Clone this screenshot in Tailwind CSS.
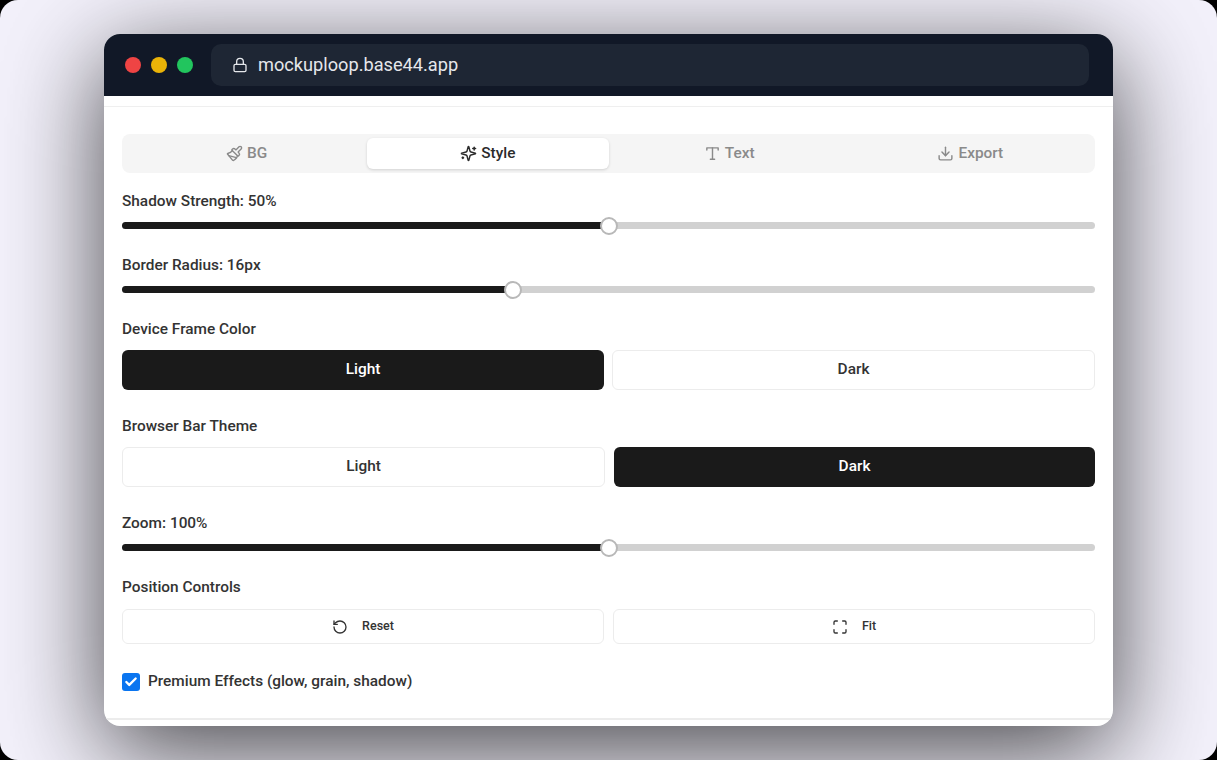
<!DOCTYPE html>
<html lang="en">
<head>
    <meta charset="UTF-8">
    <meta name="viewport" content="width=device-width, initial-scale=1.0">
    <title>Mockuploop</title>
    <script src="https://cdn.jsdelivr.net/npm/@tailwindcss/browser@4"></script>
</head>
<body class="bg-black font-['Roboto',sans-serif] overflow-hidden">
    <div class="w-[1217px] h-[760px] rounded-[18px] bg-[#f3f1fb] pl-[104px] pt-[34px] overflow-hidden">
        <!-- window -->
        <div class="w-[1009px] h-[692px] rounded-[16px] overflow-hidden bg-white shadow-[0_24px_100px_rgba(0,0,0,0.72)] flex flex-col">
            <!-- title bar -->
            <div class="h-[62px] bg-[#111827] flex items-center pl-[21px] pr-[24px] shrink-0">
                <div class="flex gap-[10px]">
                    <span class="w-4 h-4 rounded-full bg-[#ef4444]"></span>
                    <span class="w-4 h-4 rounded-full bg-[#eab308]"></span>
                    <span class="w-4 h-4 rounded-full bg-[#22c55e]"></span>
                </div>
                <div class="ml-[18px] flex-1 h-[42px] rounded-[10px] bg-[#1e2634] flex items-center pl-[21px] gap-[10px] text-[#e5e7eb]">
                    <svg class="w-4 h-4" viewBox="0 0 24 24" fill="none" stroke="currentColor" stroke-width="2" stroke-linecap="round" stroke-linejoin="round"><rect width="18" height="11" x="3" y="11" rx="2"/><path d="M7 11V7a5 5 0 0 1 10 0v4"/></svg>
                    <span class="text-[18.2px] leading-none">mockuploop.base44.app</span>
                </div>
            </div>

            <div class="h-[11px] border-b border-[#efefef] shrink-0"></div>

            <!-- panel -->
            <div class="flex-1 px-[18px] pt-[27px] flex flex-col text-[#333333]">
                <!-- tabs -->
                <div class="grid grid-cols-4 h-[39px] p-1 rounded-[8px] bg-[#f5f5f5] text-[15.4px] font-medium text-[#8a8a8a]">
                    <div class="flex items-center justify-center gap-[4px]">
                        <svg class="w-[17px] h-[17px]" viewBox="0 0 24 24" fill="none" stroke="currentColor" stroke-width="2" stroke-linecap="round" stroke-linejoin="round"><path d="m14.622 17.897-10.68-2.913"/><path d="M18.376 2.622a1 1 0 1 1 3.002 3.002L17.36 9.643a.5.5 0 0 0 0 .707l.944.944a2.41 2.41 0 0 1 0 3.408l-.944.944a.5.5 0 0 1-.707 0L8.354 7.348a.5.5 0 0 1 0-.707l.944-.944a2.41 2.41 0 0 1 3.408 0l.944.944a.5.5 0 0 0 .707 0z"/><path d="M9 8c-1.804 2.71-3.97 3.46-6.583 3.948a.507.507 0 0 0-.302.819l7.32 8.883a1 1 0 0 0 1.185.204C12.735 20.405 16 16.792 16 15"/></svg>
                        BG
                    </div>
                    <div class="flex items-center justify-center gap-[4px] bg-white rounded-[6px] shadow-[0_1px_3px_rgba(0,0,0,0.15)] text-[#2b2b2b]">
                        <svg class="w-[17px] h-[17px]" viewBox="0 0 24 24" fill="none" stroke="currentColor" stroke-width="2" stroke-linecap="round" stroke-linejoin="round"><path d="M9.937 15.5A2 2 0 0 0 8.5 14.063l-6.135-1.582a.5.5 0 0 1 0-.962L8.5 9.936A2 2 0 0 0 9.937 8.5l1.582-6.135a.5.5 0 0 1 .963 0L14.063 8.5A2 2 0 0 0 15.5 9.937l6.135 1.581a.5.5 0 0 1 0 .964L15.5 14.063a2 2 0 0 0-1.437 1.437l-1.582 6.135a.5.5 0 0 1-.963 0z"/><path d="M20 3v4"/><path d="M22 5h-4"/><path d="M4 17v2"/><path d="M5 18H3"/></svg>
                        Style
                    </div>
                    <div class="flex items-center justify-center gap-[4px]">
                        <svg class="w-[17px] h-[17px]" viewBox="0 0 24 24" fill="none" stroke="currentColor" stroke-width="2" stroke-linecap="round" stroke-linejoin="round"><path d="M4 7V4h16v3"/><path d="M9 20h6"/><path d="M12 4v16"/></svg>
                        Text
                    </div>
                    <div class="flex items-center justify-center gap-[4px]">
                        <svg class="w-[17px] h-[17px]" viewBox="0 0 24 24" fill="none" stroke="currentColor" stroke-width="2" stroke-linecap="round" stroke-linejoin="round"><path d="M12 15V3"/><path d="M21 15v4a2 2 0 0 1-2 2H5a2 2 0 0 1-2-2v-4"/><path d="m7 10 5 5 5-5"/></svg>
                        Export
                    </div>
                </div>

                <!-- shadow strength -->
                <div class="mt-[19px] h-[20px] flex items-center text-[15.4px] font-medium">Shadow Strength: 50%</div>
                <div class="mt-[10px] relative h-[7px] rounded-full bg-[#d1d1d1]">
                    <div class="h-full w-[487px] rounded-l-full bg-[#1a1a1a]"></div>
                    <div class="absolute left-[477.5px] top-[-5.5px] w-[18px] h-[18px] rounded-full bg-white border-2 border-[#b8b8b8]"></div>
                </div>

                <!-- border radius -->
                <div class="mt-[27px] h-[20px] flex items-center text-[15.4px] font-medium">Border Radius: 16px</div>
                <div class="mt-[10px] relative h-[7px] rounded-full bg-[#d1d1d1]">
                    <div class="h-full w-[392px] rounded-l-full bg-[#1a1a1a]"></div>
                    <div class="absolute left-[382px] top-[-5.5px] w-[18px] h-[18px] rounded-full bg-white border-2 border-[#b8b8b8]"></div>
                </div>

                <!-- device frame color -->
                <div class="mt-[27px] h-[20px] flex items-center text-[15.4px] font-medium">Device Frame Color</div>
                <div class="mt-[10px] flex gap-[8px] text-[15.4px] font-medium">
                    <div class="w-[482px] h-[40px] rounded-[6px] bg-[#1a1a1a] text-white flex items-center justify-center">Light</div>
                    <div class="flex-1 h-[40px] rounded-[6px] border border-[#ececec] flex items-center justify-center">Dark</div>
                </div>

                <!-- browser bar theme -->
                <div class="mt-[27px] h-[20px] flex items-center text-[15.4px] font-medium">Browser Bar Theme</div>
                <div class="mt-[10px] flex gap-[9px] text-[15.4px] font-medium">
                    <div class="w-[483px] h-[40px] rounded-[6px] border border-[#ececec] flex items-center justify-center">Light</div>
                    <div class="flex-1 h-[40px] rounded-[6px] bg-[#1a1a1a] text-white flex items-center justify-center">Dark</div>
                </div>

                <!-- zoom -->
                <div class="mt-[27px] h-[20px] flex items-center text-[15.4px] font-medium">Zoom: 100%</div>
                <div class="mt-[10px] relative h-[7px] rounded-full bg-[#d1d1d1]">
                    <div class="h-full w-[487px] rounded-l-full bg-[#1a1a1a]"></div>
                    <div class="absolute left-[477.5px] top-[-5.5px] w-[18px] h-[18px] rounded-full bg-white border-2 border-[#b8b8b8]"></div>
                </div>

                <!-- position controls -->
                <div class="mt-[27px] h-[20px] flex items-center text-[15.4px] font-medium">Position Controls</div>
                <div class="mt-[11px] flex gap-[9px] text-[12.5px] font-medium">
                    <div class="w-[482px] h-[35px] rounded-[6px] border border-[#ececec] flex items-center justify-center gap-[14px]">
                        <svg class="w-4 h-4" viewBox="0 0 24 24" fill="none" stroke="currentColor" stroke-width="2" stroke-linecap="round" stroke-linejoin="round"><path d="M3 12a9 9 0 1 0 9-9 9.75 9.75 0 0 0-6.74 2.74L3 8"/><path d="M3 3v5h5"/></svg>
                        Reset
                    </div>
                    <div class="flex-1 h-[35px] rounded-[6px] border border-[#ececec] flex items-center justify-center gap-[14px]">
                        <svg class="w-4 h-4" viewBox="0 0 24 24" fill="none" stroke="currentColor" stroke-width="2" stroke-linecap="round" stroke-linejoin="round"><path d="M8 3H5a2 2 0 0 0-2 2v3"/><path d="M21 8V5a2 2 0 0 0-2-2h-3"/><path d="M3 16v3a2 2 0 0 0 2 2h3"/><path d="M16 21h3a2 2 0 0 0 2-2v-3"/></svg>
                        Fit
                    </div>
                </div>

                <!-- premium -->
                <div class="mt-[26px] flex items-center gap-[8px] text-[15.4px] font-medium">
                    <span class="w-[18px] h-[18px] rounded-[3px] bg-[#0a75f0] flex items-center justify-center">
                        <svg class="w-[14px] h-[14px]" viewBox="0 0 24 24" fill="none" stroke="#fff" stroke-width="4" stroke-linecap="round" stroke-linejoin="round"><path d="M20 6 9 17l-5-5"/></svg>
                    </span>
                    Premium Effects (glow, grain, shadow)
                </div>
            </div>

            <div class="h-[8px] border-t-2 border-[#ececec] shrink-0"></div>
        </div>
    </div>
</body>
</html>
